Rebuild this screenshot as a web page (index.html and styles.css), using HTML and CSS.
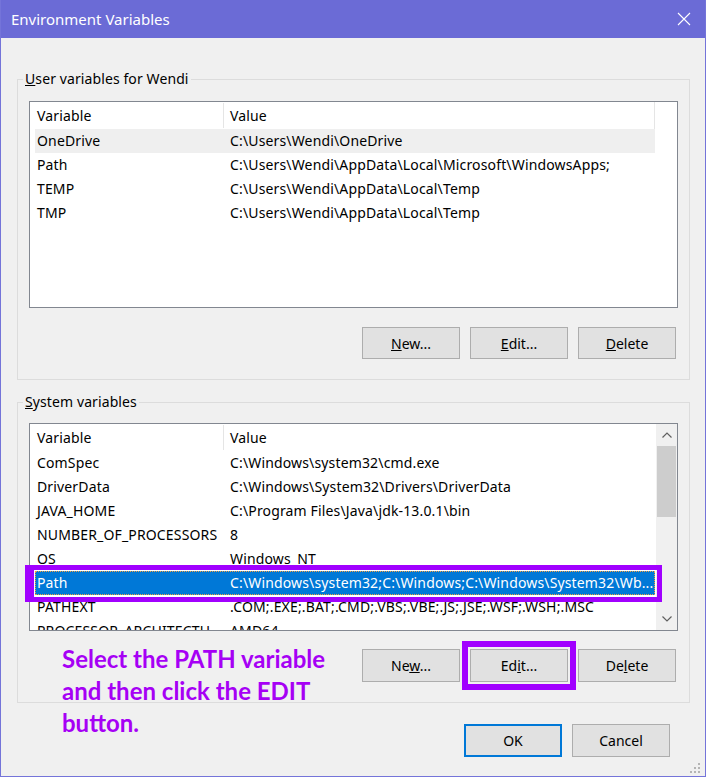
FILE: index.html
```html
<!DOCTYPE html>
<html lang="en">
<head>
    <meta charset="UTF-8">
    <meta name="viewport" content="width=device-width, initial-scale=1.0">
    <title>Environment Variables</title>
    <link rel="stylesheet" href="styles.css">
</head>
<body>
    <div class="window">
        <div class="titlebar">
            <span class="title">Environment Variables</span>
            <svg class="close" width="14" height="14" viewBox="0 0 14 14">
                <path d="M1 1 L13 13 M13 1 L1 13" stroke="#fff" stroke-width="1.1" fill="none"/>
            </svg>
        </div>
        <div class="content">
            <fieldset class="group user-group">
                <legend><u>U</u>ser variables for Wendi</legend>
                <div class="listbox user-list">
                    <div class="rows">
                        <div class="row head"><div class="c-var">Variable</div><div class="c-val">Value</div></div>
                        <div class="row hover"><div class="c-var">OneDrive</div><div class="c-val">C:\Users\Wendi\OneDrive</div></div>
                        <div class="row"><div class="c-var">Path</div><div class="c-val">C:\Users\Wendi\AppData\Local\Microsoft\WindowsApps;</div></div>
                        <div class="row"><div class="c-var">TEMP</div><div class="c-val">C:\Users\Wendi\AppData\Local\Temp</div></div>
                        <div class="row"><div class="c-var">TMP</div><div class="c-val">C:\Users\Wendi\AppData\Local\Temp</div></div>
                    </div>
                </div>
                <div class="buttons">
                    <button class="btn"><u>N</u>ew...</button>
                    <button class="btn"><u>E</u>dit...</button>
                    <button class="btn"><u>D</u>elete</button>
                </div>
            </fieldset>

            <fieldset class="group sys-group">
                <legend><u>S</u>ystem variables</legend>
                <div class="listbox sys-list">
                    <div class="rows">
                        <div class="row head"><div class="c-var">Variable</div><div class="c-val">Value</div></div>
                        <div class="row"><div class="c-var">ComSpec</div><div class="c-val">C:\Windows\system32\cmd.exe</div></div>
                        <div class="row"><div class="c-var">DriverData</div><div class="c-val">C:\Windows\System32\Drivers\DriverData</div></div>
                        <div class="row"><div class="c-var">JAVA_HOME</div><div class="c-val">C:\Program Files\Java\jdk-13.0.1\bin</div></div>
                        <div class="row"><div class="c-var">NUMBER_OF_PROCESSORS</div><div class="c-val">8</div></div>
                        <div class="row"><div class="c-var">OS</div><div class="c-val">Windows_NT</div></div>
                        <div class="row selected"><div class="c-var">Path</div><div class="c-val">C:\Windows\system32;C:\Windows;C:\Windows\System32\Wb...</div></div>
                        <div class="row"><div class="c-var">PATHEXT</div><div class="c-val">.COM;.EXE;.BAT;.CMD;.VBS;.VBE;.JS;.JSE;.WSF;.WSH;.MSC</div></div>
                        <div class="row"><div class="c-var">PROCESSOR_ARCHITECTU...</div><div class="c-val">AMD64</div></div>
                    </div>
                    <div class="scrollbar">
                        <div class="arrow">
                            <svg width="10" height="6" viewBox="0 0 10 6"><path d="M0.5 5.5 L5 1 L9.5 5.5" stroke="#606060" stroke-width="1.2" fill="none"/></svg>
                        </div>
                        <div class="thumb"></div>
                        <div class="track"></div>
                        <div class="arrow">
                            <svg width="10" height="6" viewBox="0 0 10 6"><path d="M0.5 0.5 L5 5 L9.5 0.5" stroke="#606060" stroke-width="1.2" fill="none"/></svg>
                        </div>
                    </div>
                    <div class="path-mark"></div>
                </div>
                <div class="buttons">
                    <button class="btn">Ne<u>w</u>...</button>
                    <button class="btn marked">Ed<u>i</u>t...</button>
                    <button class="btn">De<u>l</u>ete</button>
                </div>
            </fieldset>

            <div class="dialog-buttons">
                <button class="btn default">OK</button>
                <button class="btn">Cancel</button>
            </div>
        </div>

        <p class="note">Select the PATH variable<br>and then click the EDIT<br>button.</p>

        <svg class="grip" width="12" height="12" viewBox="0 0 12 12">
            <rect x="8" y="0" width="2" height="2" fill="#b4b4b4"/>
            <rect x="4" y="4" width="2" height="2" fill="#b4b4b4"/>
            <rect x="8" y="4" width="2" height="2" fill="#b4b4b4"/>
            <rect x="0" y="8" width="2" height="2" fill="#b4b4b4"/>
            <rect x="4" y="8" width="2" height="2" fill="#b4b4b4"/>
            <rect x="8" y="8" width="2" height="2" fill="#b4b4b4"/>
        </svg>
    </div>
</body>
</html>
```

FILE: styles.css
```css
* {box-sizing:border-box}
body {margin:0; font-family:"Noto Sans", "Open Sans", sans-serif; font-size:14px; color:#000}

.window {position:relative; width:706px; height:777px; background:#f0f0f0; border:1px solid #7474d9; border-top:none; overflow:hidden}
.titlebar {height:38px; margin:0 -1px; background:#6b6bd6; color:#fff; display:flex; align-items:center; justify-content:space-between; padding:0 15px 0 11px}
.title {font-size:15px; line-height:20px}
.close {display:block}

.content {padding:0 15px 0 16px}

.group {margin:0; border:1px solid #dcdcdc; padding:0 11px 20px; min-width:0}
.group legend {font-size:14px; line-height:20px; padding:0 2px; margin-left:-6px; letter-spacing:0.1px}
.user-group {margin-top:31px}
.sys-group {margin-top:12px}

.listbox {position:relative; display:flex; background:#fff; border:1px solid #828790}
.user-list {margin-top:12px; height:207px}
.sys-list {margin-top:11px; height:208px}
.rows {flex:1; overflow:hidden; padding-left:5px}

.row {display:flex; width:620px; height:24px; line-height:24px; white-space:nowrap; letter-spacing:0.15px}
.row.head {height:27px; line-height:27px; position:relative}
.row.head .c-var {border-right:1px solid #e5e5e5; height:25px; margin-top:1px; line-height:25px}
.user-list .row.head {border-right:1px solid #e5e5e5}
.c-var {width:189px; padding-left:2px; overflow:hidden; flex:none}
.c-val {flex:1; padding-left:6px; overflow:hidden}
.row.hover {background:#efefef}
.row.selected {background:#0078d7; color:#fff; outline:1px dotted #f0a040; outline-offset:-1px}

.scrollbar {width:21px; flex:none; background:#f0f0f0; display:flex; flex-direction:column}
.scrollbar .arrow {height:22px; display:flex; align-items:center; justify-content:center}
.scrollbar .thumb {height:71px; margin:0 1px; background:#cdcdcd}
.scrollbar .track {flex:1}

.path-mark {position:absolute; left:-5px; top:141px; width:637px; height:37px; border:5px solid #a100ff; border-left-width:9px; pointer-events:none}

.buttons {display:flex; justify-content:flex-end; gap:10px; padding-right:2px}
.user-group .buttons {margin-top:19px}
.sys-group .buttons {margin-top:18px}
.btn {width:98px; height:32px; background:#e1e1e1; border:1px solid #adadad; font-family:inherit; font-size:14px; color:#000; padding:0}
.sys-group .btn {height:33px}
.btn.marked {outline:6px solid #a100ff; outline-offset:2px}

.dialog-buttons {display:flex; justify-content:flex-end; gap:10px; margin-top:21px; padding-right:20px}
.dialog-buttons .btn {height:33px}
.btn.default {border:2px solid #0078d7}

.note {position:absolute; left:61px; top:643px; margin:0; font-family:Lato, sans-serif; font-weight:700; font-size:24px; line-height:32px; color:#a600f5}

.grip {position:absolute; right:3px; bottom:1px}
```
